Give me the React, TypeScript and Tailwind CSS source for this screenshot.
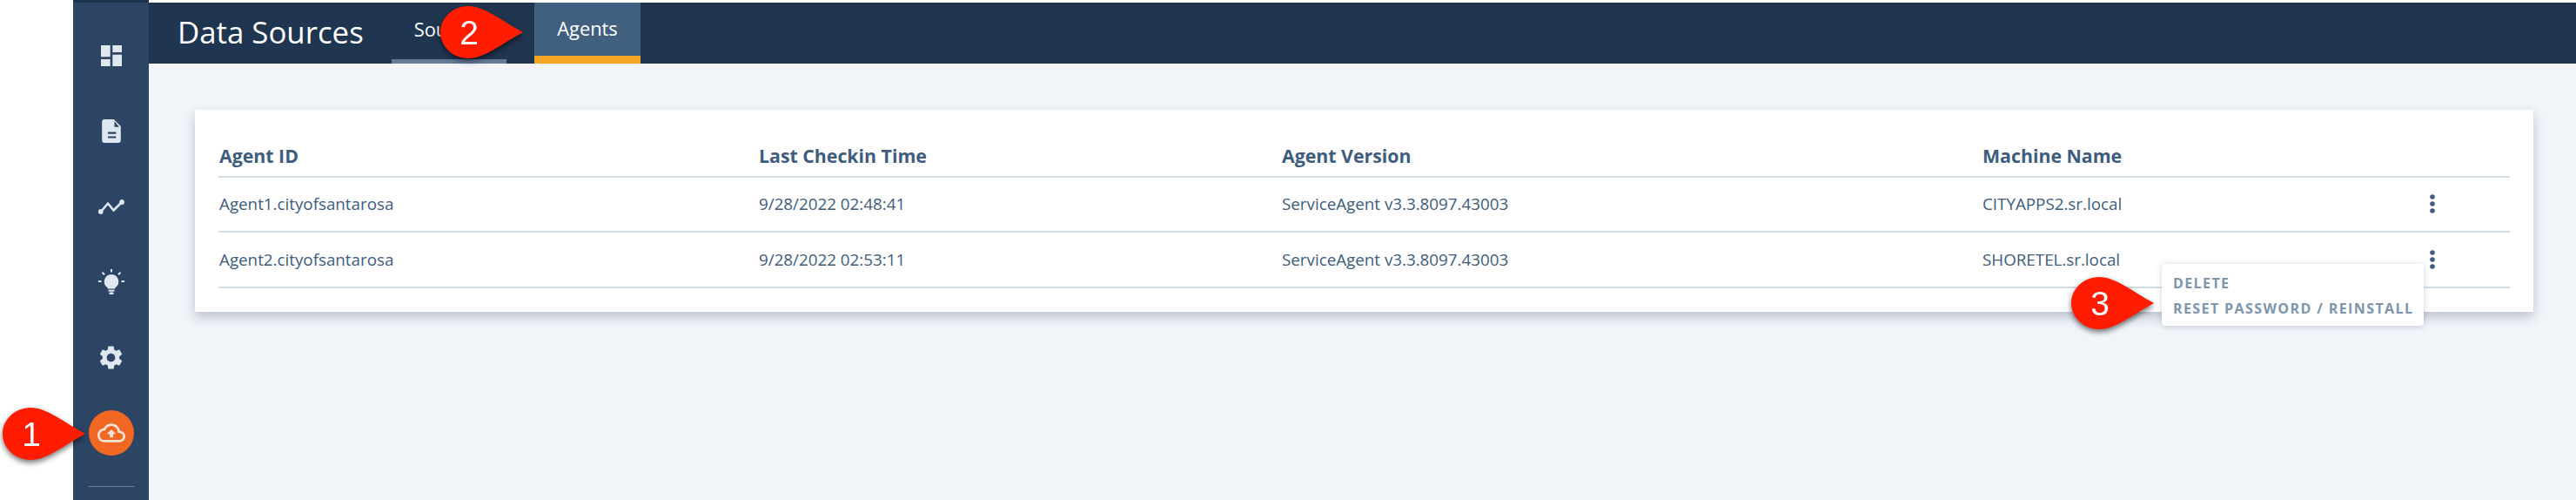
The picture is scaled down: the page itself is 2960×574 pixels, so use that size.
import React, { ReactNode } from 'react';

const rows = [
  { id: 'Agent1.cityofsantarosa', time: '9/28/2022 02:48:41', version: 'ServiceAgent v3.3.8097.43003', machine: 'CITYAPPS2.sr.local' },
  { id: 'Agent2.cityofsantarosa', time: '9/28/2022 02:53:11', version: 'ServiceAgent v3.3.8097.43003', machine: 'SHORETEL.sr.local' },
];

const gridCols = 'grid grid-cols-[620px_601px_805px_1fr] items-center';

function SideItem({ children }: { children: ReactNode }) {
  return <div className="flex h-[86.6px] w-full items-center justify-center text-[#dfe8f1]">{children}</div>;
}

/* numbered red teardrop pointing right, sits on top of the screenshot */
function Callout({ n, className }: { n: string; className: string }) {
  return (
    <div className={`absolute h-[62px] w-[96px] drop-shadow-[0_3px_3px_rgba(0,0,0,0.55)] ${className}`}>
      <svg viewBox="0 0 96 62" className="absolute inset-0 h-full w-full">
        <path d="M33 1C52 1 70 17 96 31C70 45 52 61 33 61C15 61 1 47 1 31C1 15 15 1 33 1Z" fill="#ff1c00" />
      </svg>
      <span className="absolute left-0 top-0 flex h-[62px] w-[68px] items-center justify-center font-['Liberation_Sans',sans-serif] text-[39px] leading-none text-white">
        {n}
      </span>
    </div>
  );
}

export default function App() {
  return (
    <div className="relative flex h-[574px] w-[2960px] overflow-hidden bg-white font-['Open_Sans',sans-serif]">
      <div className="w-[84px] shrink-0" />

      {/* Sidebar */}
      <aside className="flex w-[87px] shrink-0 flex-col items-center bg-[#2d4565]">
        <div className="h-[3px] w-full bg-[#20354f]" />
        <div className="h-[18px]" />
        <SideItem>
          <svg viewBox="3 3 18 18" className="h-6 w-6" fill="currentColor">
            <path d="M3 13h8V3H3v10zm0 8h8v-6H3v6zm10 0h8V11h-8v10zm0-18v6h8V3h-8z" />
          </svg>
        </SideItem>
        <SideItem>
          <svg viewBox="4 2 16 20" className="h-[27px] w-[22px]" fill="currentColor">
            <path d="M14 2H6c-1.1 0-2 .9-2 2v16c0 1.1.89 2 1.99 2H18c1.1 0 2-.9 2-2V8l-6-6zm2 16H9v-1.6h7V18zm0-3.6H9v-1.6h7v1.6zM14.6 8.4V3.6l4 4.8h-4z" />
          </svg>
        </SideItem>
        <SideItem>
          <svg viewBox="0 0 30 17" className="h-[17px] w-[30px]" fill="none" stroke="currentColor" strokeWidth="2.6" strokeLinecap="round" strokeLinejoin="round">
            <path d="M2.5 14.5L11 4.5L17.5 12.5L27 3" />
            <circle cx="2.7" cy="14" r="1.6" fill="currentColor" />
            <circle cx="27" cy="3" r="1.6" fill="currentColor" />
          </svg>
        </SideItem>
        <SideItem>
          <svg viewBox="0 0 30 30" className="h-[30px] w-[30px]" fill="currentColor">
            <path d="M15 6a8.300 8.300 0 0 0-4.800 15c.5.4.8 1 .8 1.600h8c0-.6.3-1.200.8-1.600A8.300 8.300 0 0 0 15 6z" />
            <rect x="11.500" y="23.700" width="7" height="2" />
            <rect x="12.500" y="26.500" width="5" height="2.500" rx="1" />
            <rect x="14" y="0" width="2" height="3.500" />
            <rect x="0" y="13" width="3.500" height="2" />
            <rect x="26.500" y="13" width="3.500" height="2" />
            <rect x="4" y="4" width="3.500" height="2" transform="rotate(42 5.750 5)" />
            <rect x="22.500" y="4" width="3.500" height="2" transform="rotate(-42 24.250 5)" />
          </svg>
        </SideItem>
        <SideItem>
          <svg viewBox="2 2 20 20" className="h-[27px] w-[27px]" fill="currentColor">
            <path d="M19.14 12.94c.04-.3.06-.61.06-.94 0-.32-.02-.64-.07-.94l2.03-1.58c.18-.14.23-.41.12-.61l-1.92-3.32c-.12-.22-.37-.29-.59-.22l-2.39.96c-.5-.38-1.030-.7-1.620-.94l-.36-2.540c-.04-.24-.24-.41-.48-.41h-3.840c-.24 0-.43.170-.47.410l-.36 2.540c-.59.240-1.130.570-1.620.940l-2.390-.960c-.22-.080-.47 0-.59.220L2.740 8.870c-.12.210-.08.470.12.610l2.030 1.580c-.05.300-.09.630-.09.940s.02.640.07.940l-2.030 1.580c-.18.140-.23.410-.12.610l1.920 3.320c.12.220.37.290.59.220l2.390-.960c.5.380 1.030.700 1.620.940l.36 2.540c.05.240.24.410.48.410h3.840c.24 0 .44-.170.47-.410l.36-2.540c.59-.240 1.130-.560 1.620-.940l2.390.960c.22.080.47 0 .59-.220l1.920-3.320c.12-.220.07-.470-.12-.610l-2.010-1.580zM12 15.600c-1.980 0-3.600-1.620-3.600-3.600s1.620-3.600 3.600-3.600 3.600 1.620 3.600 3.600-1.620 3.600-3.600 3.600z" />
          </svg>
        </SideItem>
        <SideItem>
          <div className="flex h-[52px] w-[52px] items-center justify-center rounded-full bg-[#f26722]">
            <svg viewBox="0 0 24 24" className="h-8 w-8 text-[#f6e3d8]" fill="currentColor">
              <path d="M19.35 10.04C18.67 6.59 15.64 4 12 4 9.11 4 6.6 5.64 5.35 8.04 2.34 8.36 0 10.91 0 14c0 3.31 2.69 6 6 6h13c2.76 0 5-2.24 5-5 0-2.64-2.05-4.78-4.65-4.96zM19 18H6c-2.21 0-4-1.79-4-4 0-2.05 1.53-3.76 3.56-3.97l1.07-.11.5-.95C8.08 7.14 9.94 6 12 6c2.62 0 4.88 1.86 5.39 4.43l.3 1.5 1.53.11c1.56.1 2.78 1.41 2.78 2.96 0 1.65-1.35 3-3 3z" />
              <path d="M8 13h2.55v3h2.9v-3H16l-4-4z" />
            </svg>
          </div>
        </SideItem>
        <div className="mt-[17px] h-px w-[52px] bg-[#6d829c]" />
      </aside>

      {/* Main */}
      <div className="flex min-w-0 flex-1 flex-col pt-[3px]">
        <header className="flex h-[70px] shrink-0 bg-[#20354f] text-white">
          <h1 className="ml-[33px] w-[246px] self-center pb-[1px] text-[34.800px] font-normal leading-none">Data Sources</h1>
          <div className="flex h-full w-[132px] items-center justify-center border-b-[5px] border-[#657a96] pb-[3px] text-[21.800px]">
            Sources
          </div>
          <div className="ml-[32px] flex h-full w-[122px] items-center justify-center border-b-[9px] border-[#f5a623] bg-[#41607f] pb-[1px] text-[21.800px]">
            Agents
          </div>
        </header>

        <main className="flex-1 bg-[#f1f4f9] pl-[53px] pr-[49px] pt-[53px]">
          <section className="h-[232px] bg-white px-[27px] text-[#3e5c7e] shadow-[0_6px_12px_rgba(60,80,105,0.3)]">
            <div className={`${gridCols} h-[78px] border-b-2 border-[#d3dde8] pl-px pt-[29px] text-[21.300px] font-bold`}>
              <div>Agent ID</div>
              <div>Last Checkin Time</div>
              <div>Agent Version</div>
              <div>Machine Name</div>
            </div>
            {rows.map((row, i) => (
              <div key={row.id} className={`${gridCols} ${i === 0 ? 'h-[63px]' : 'h-[64px]'} relative border-b-2 border-[#d3dde8] pl-px text-[18.800px]`}>
                <div>{row.id}</div>
                <div>{row.time}</div>
                <div>{row.version}</div>
                <div>{row.machine}</div>
                <svg viewBox="0 0 6 22" className={`absolute left-[2541px] ${i === 0 ? 'top-[19px]' : 'top-[20px]'} h-[22px] w-[6px] fill-[#3e5c7e]`}>
                  <circle cx="3" cy="3" r="2.800" />
                  <circle cx="3" cy="11" r="2.800" />
                  <circle cx="3" cy="19" r="2.800" />
                </svg>
              </div>
            ))}
          </section>
        </main>
      </div>

      {/* Row action menu */}
      <div className="absolute left-[2484px] top-[303px] flex h-[71px] w-[301px] flex-col rounded-[4px] bg-white pl-[13px] pt-[8px] text-[16px] font-bold leading-[29px] tracking-[1.400px] text-[#7d95ad] shadow-[0_1px_6px_rgba(60,80,105,0.25)]">
        <div>DELETE</div>
        <div>RESET PASSWORD / REINSTALL</div>
      </div>

      <Callout n="1" className="left-[2px] top-[467px]" />
      <Callout n="2" className="left-[505px] top-[6px]" />
      <Callout n="3" className="left-[2379px] top-[317px]" />
    </div>
  );
}
